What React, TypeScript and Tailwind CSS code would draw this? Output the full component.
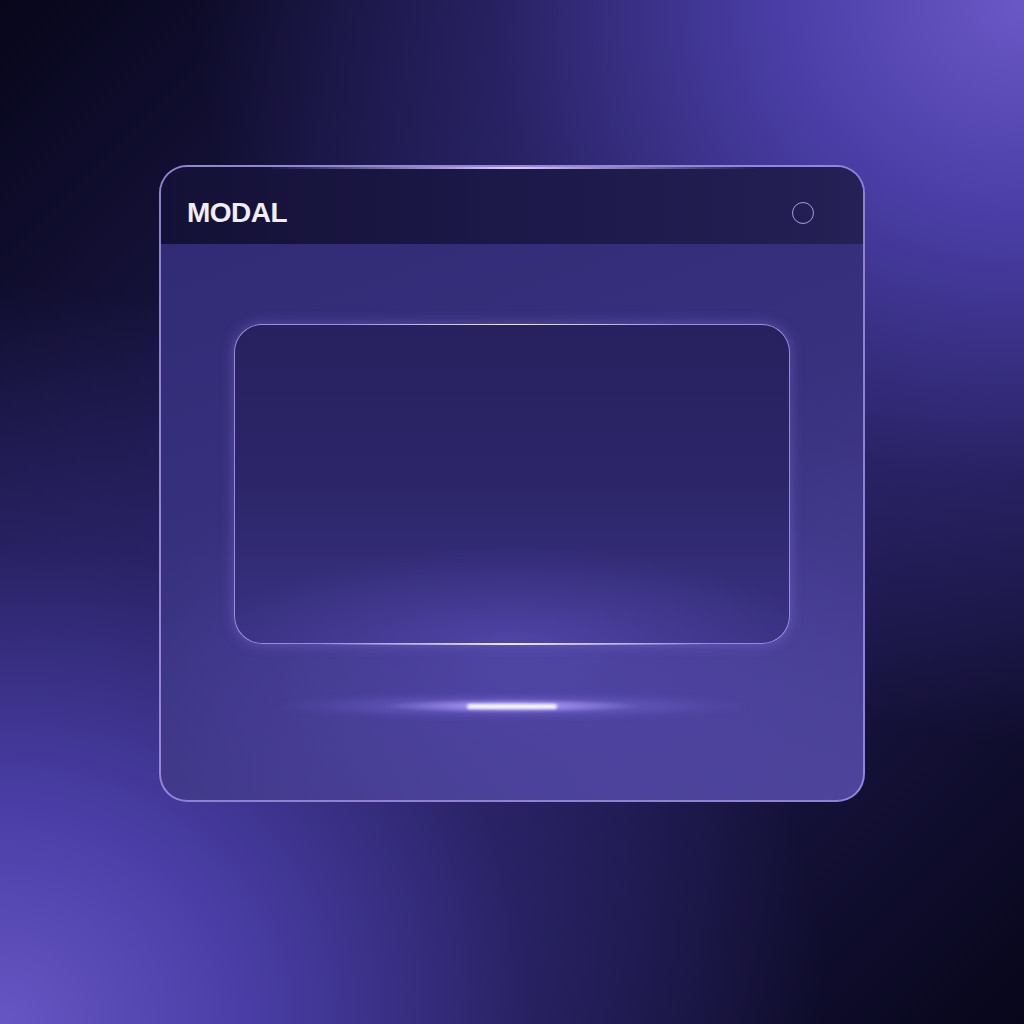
import React from 'react';

export default function App() {
  return (
    <div
      className="flex min-h-screen w-full flex-col items-center bg-[#17133f] bg-[radial-gradient(ellipse_95%_85%_at_100%_0%,#6a58c6_0%,#4a3ea6_25%,rgba(50,42,120,0.6)_55%,transparent_85%),radial-gradient(ellipse_95%_85%_at_0%_100%,#6656c4_0%,#4a3ea6_25%,rgba(50,42,120,0.6)_55%,transparent_85%),linear-gradient(135deg,#07061a_0%,#221d58_45%,#221d58_55%,#07061a_100%)] pt-[165px]"
      style={{ fontFamily: '"Liberation Sans", Arial, sans-serif' }}
    >
      {/* modal window */}
      <div className="relative flex h-[637px] w-[706px] flex-col overflow-hidden rounded-[28px] border-2 border-[#a797e8]/80 bg-[linear-gradient(160deg,#302a74_0%,#38317e_50%,#4e449c_100%)]">
        <div className="pointer-events-none absolute left-[15%] right-[15%] top-0 h-[2px] bg-[linear-gradient(90deg,transparent,#d9ceff,transparent)]" />

        {/* header */}
        <div className="flex h-[77px] shrink-0 items-center justify-between bg-[linear-gradient(90deg,#141136_0%,#1c1848_50%,#252055_100%)] pl-[26px] pr-[49px] pt-[15px]">
          <span className="text-[28px] font-bold tracking-[-0.5px] text-[#f1eefc]">MODAL</span>
          <div className="h-[22px] w-[22px] rounded-full border-[1.5px] border-[#a99ae4]" />
        </div>

        {/* body */}
        <div className="flex flex-1 flex-col items-center bg-[radial-gradient(ellipse_60%_35%_at_50%_75%,rgba(110,95,220,0.3),transparent)] pt-[80px]">
          <div className="relative h-[320px] w-[556px] rounded-[28px] border-[1.5px] border-[#b4a6f2]/80 bg-[linear-gradient(180deg,#27215f_0%,#2c2669_50%,#3a3283_100%)] shadow-[0_0_14px_rgba(160,140,255,0.35)]">
            <div className="pointer-events-none absolute inset-0 rounded-[28px] bg-[radial-gradient(ellipse_55%_30%_at_50%_100%,rgba(120,100,230,0.35),transparent)]" />
            <div className="pointer-events-none absolute -top-[1.5px] left-[20%] right-[20%] h-[1.5px] bg-[linear-gradient(90deg,transparent,#f0eaff,transparent)]" />
            <div className="pointer-events-none absolute -bottom-[1.5px] left-[15%] right-[15%] h-[1.5px] bg-[linear-gradient(90deg,transparent,#f0eaff,transparent)]" />
          </div>

          {/* glow line */}
          <div className="relative mt-[56px] flex h-[12px] w-[480px] items-center justify-center">
            <div className="absolute h-[24px] w-[480px] rounded-full bg-[radial-gradient(ellipse_50%_50%_at_50%_50%,rgba(150,130,255,0.55),transparent)] blur-[3px]" />
            <div className="absolute h-[14px] w-[260px] rounded-full bg-[radial-gradient(ellipse_50%_50%_at_50%_50%,rgba(190,175,255,0.9),transparent)] blur-[1px]" />
            <div className="absolute h-[5px] w-[90px] rounded-full bg-[#fbf8ff] blur-[1.5px]" />
          </div>
        </div>
      </div>
    </div>
  );
}
